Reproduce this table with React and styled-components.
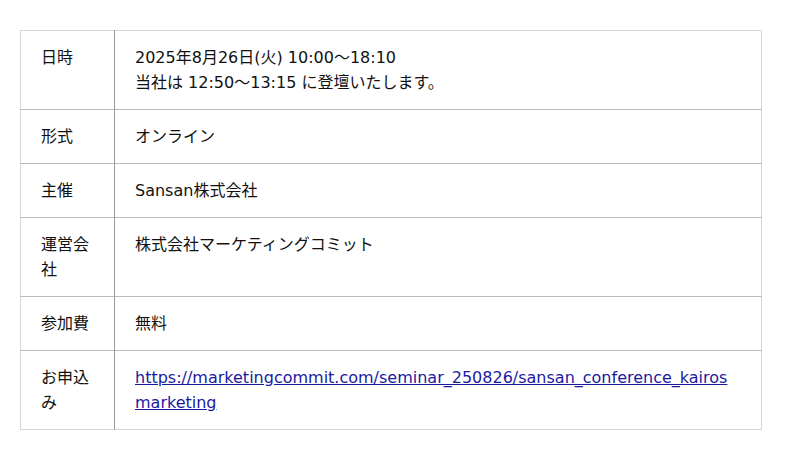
import React from "react";
import styled, { createGlobalStyle } from "styled-components";

const Global = createGlobalStyle`
  html, body { margin: 0; padding: 0; background: #fff; }
  body {
    font-family: "DejaVu Sans", "Noto Sans CJK JP", sans-serif;
    color: #111;
  }
`;

const Page = styled.div`
  padding: 30px 38px 30px 20px;
`;

const Table = styled.table`
  width: 742px;
  border-collapse: collapse;
  border: 1px solid #d6d6d6;
  font-size: 16px;
  line-height: 25px;
`;

const Row = styled.tr`
  border-top: 1px solid #bbb;
  &:first-child { border-top: none; }
`;

const Label = styled.th`
  width: 53px;
  padding: 14px 20px;
  text-align: left;
  font-weight: normal;
  vertical-align: top;
  border-right: 1px solid #999;
`;

const Value = styled.td`
  padding: 14px 20px;
  vertical-align: top;
  word-break: break-all;
`;

const Link = styled.a`
  color: #1a1aa0;
  text-decoration: underline;
`;

const rows = [
  { k: "日時", v: <>2025年8月26日(火) 10:00〜18:10<br />当社は 12:50〜13:15 に登壇いたします。</> },
  { k: "形式", v: "オンライン" },
  { k: "主催", v: "Sansan株式会社" },
  { k: "運営会社", v: "株式会社マーケティングコミット" },
  { k: "参加費", v: "無料" },
  {
    k: "お申込み",
    v: (
      <Link href="#">
        https://marketingcommit.com/seminar_250826/sansan_conference_kairosmarketing
      </Link>
    ),
  },
];

export default function App() {
  return (
    <>
      <Global />
      <Page>
        <Table>
          <tbody>
            {rows.map((r) => (
              <Row key={r.k}>
                <Label>{r.k}</Label>
                <Value>{r.v}</Value>
              </Row>
            ))}
          </tbody>
        </Table>
      </Page>
    </>
  );
}
